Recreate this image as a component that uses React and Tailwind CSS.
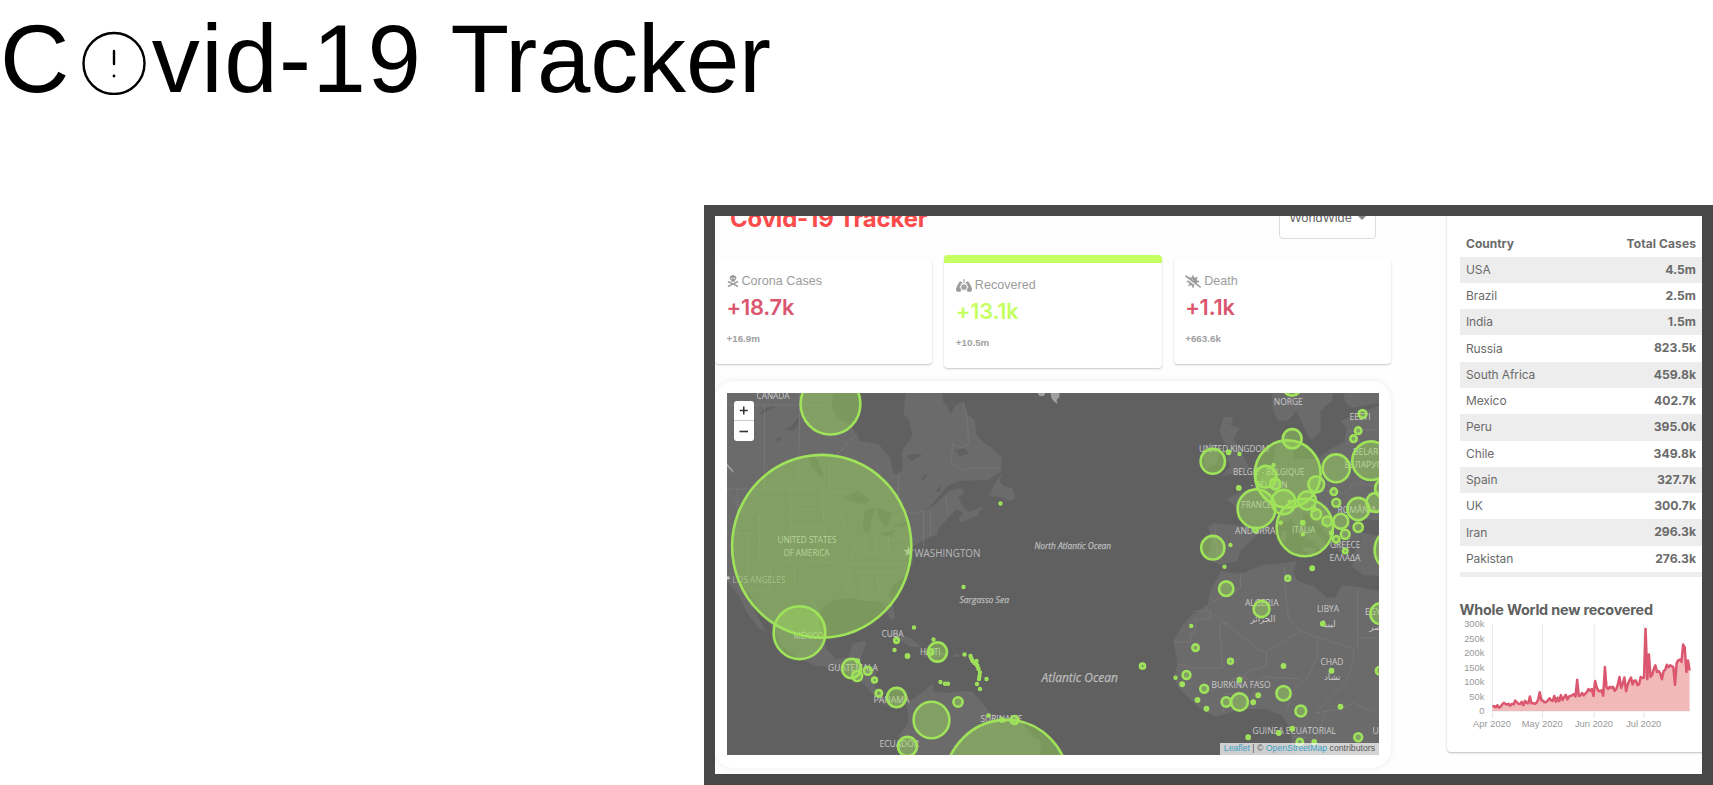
import { FaSkullCrossbones, FaLungsVirus, FaVirusSlash } from "react-icons/fa";

const countries = [
  ["USA", "4.5m"], ["Brazil", "2.5m"], ["India", "1.5m"], ["Russia", "823.5k"],
  ["South Africa", "459.8k"], ["Mexico", "402.7k"], ["Peru", "395.0k"], ["Chile", "349.8k"],
  ["Spain", "327.7k"], ["UK", "300.7k"], ["Iran", "296.3k"], ["Pakistan", "276.3k"],
];

// Daily values in thousands, starting 1 April 2020
const daily = [
  15, 17, 13, 20, 12, 15, 23, 28, 25, 22, 25, 18, 25, 23, 36, 30, 25, 24, 32, 20,
  35, 28, 27, 50, 27, 27, 25, 28, 38, 65, 38, 36, 30, 31, 36, 44, 37, 35, 52, 32,
  46, 34, 55, 38, 47, 56, 40, 50, 52, 55, 58, 50, 108, 52, 54, 62, 54, 60, 66, 76,
  70, 76, 52, 104, 82, 70, 68, 72, 53, 152, 82, 76, 84, 80, 84, 70, 76, 92, 118, 80,
  95, 116, 68, 92, 105, 116, 92, 105, 106, 90, 92, 118, 114, 115, 284, 110, 196, 118, 125, 145,
  158, 135, 138, 130, 110, 138, 142, 160, 152, 158, 155, 152, 90, 165, 175, 178, 170, 230, 220, 135,
  175, 140,
];

const land = [
  "M726 392H833L831 406L838 417L850 424L860 440L878 443L889 456L893 472L897 474L902 468L901 450L910 438L912 434L909 420L903 413L905 392H942L943 402L947 405L950 413L955 404L963 401L967 413L974 419L976 434L984 442L990 446L1001 456V470L988 479L960 480L948 484L938 496L925 510L935 503L948 490L962 487L964 492L958 496L962 505L968 511L978 507L984 505L976 515L960 522L958 517L963 511L955 509L945 520L938 527L937 533L922 540L914 544L911 548L913 556L912 563L905 574L892 586L888 594L893 606L895 616L891 620L887 613L883 603L876 600L862 600L850 597L834 599L822 606L818 618L820 632L826 648L836 658L848 656L852 643L862 640L866 642L861 655L860 664L876 665L874 684L882 697L894 698L903 698L902 704L894 703L884 704L876 698L868 688L860 680L846 671L832 666L815 665L796 656L780 645L773 628L758 608L748 590L745 588L752 606L760 620L766 631L758 627L746 611L738 594L726 580Z",
  "M905 703L915 696L925 689L933 682L932 690L946 692L960 690L972 691L982 702L990 712L1008 716L1022 722L1032 735L1040 740V755H900L896 745L899 733L908 722L907 709Z",
  "M1002 471L995 481L988 495L1001 496L1009 500L1015 497L1012 487L1003 485L999 481Z",
  "M884 634L895 631L910 637L921 646L910 646L897 637ZM923 647L935 648L948 654L936 657L922 655ZM953 653H959V656H953Z",
  "M1173 640L1182 624L1191 614L1207 604L1210 589L1221 570L1240 573L1262 564L1285 562L1296 560L1293 572L1297 580L1313 585L1327 597L1335 596L1341 584L1352 585L1379 590V755H1294L1291 742L1290 728L1281 714L1265 708L1240 708L1215 716L1200 708L1187 696L1178 687L1173 676L1177 662Z",
  "M1208 525L1213 522L1243 525L1238 508L1226 498L1240 491L1252 487L1263 474L1272 466L1275 448L1284 432L1290 440L1294 458L1316 458L1330 448L1344 441L1346 427L1340 420L1379 404V520L1361 517L1355 530L1379 535V575L1363 574L1352 566L1353 552L1362 539L1348 540L1350 553L1341 553L1331 540L1320 525L1308 514L1302 511L1302 522L1318 534L1326 544L1320 550L1314 542L1297 531L1291 518L1276 526L1264 530L1257 534L1250 540L1240 550L1237 560L1220 564L1207 558L1211 541Z",
  "M1272 392L1272 409L1278 420L1288 419L1296 410L1303 425L1310 439L1320 431L1320 410L1332 399V392Z",
  "M1223 416L1233 416L1230 424L1239 427L1233 438L1240 449L1246 461L1249 467L1236 472L1221 475L1230 465L1226 457L1232 451L1223 440L1219 430ZM1209 441L1219 447L1216 463L1205 468L1203 456Z",
  "M1343 392H1379V402L1351 407L1345 402Z",
  "M1302 546L1316 547L1314 554L1303 550ZM1281 529L1287 530L1285 541L1280 539Z",
];

const lakes = [
  "M844 497L857 490L869 498L864 503L853 501ZM864 510L874 507L868 533L862 528ZM875 507L892 512L886 526L880 519ZM880 533L895 529L890 536ZM893 524L907 521L904 526Z",
  "M806 453L816 457L823 473L821 477L811 465ZM758 414L764 407L775 405L765 411ZM785 428L791 425L798 416L797 424L793 430ZM775 438L782 436L778 441Z",
  "M906 455L914 453L922 454L911 460ZM921 476L928 472L922 481ZM935 490L941 484L939 491ZM955 449L964 447L969 453L959 455Z",
];

const borders = [
  "M726 404H832M764 404V488M799 392V425L798 480M726 488H820L830 492L848 490M829 461V488M829 461L857 432M790 488V566M790 508H822M790 526H824M737 488V532M759 514V561M726 532H760M760 538H790M747 532V584M768 561H832M727 488L742 510L759 514M822 490L825 560L842 566M840 508L845 530L855 540L850 562L846 590M865 533V552M875 533V554M888 534V548M858 556L874 552L890 540L905 535M842 563H910M850 571H898M862 572V597M876 572L880 597M770 561V590L742 590M794 561V588L808 595L815 606M898 472V505L912 513L922 510M923 510V548M930 510V535M945 495L948 514M963 401L967 420L968 443L962 447L952 443L951 462L962 470L968 467H998",
];

const african = [
  "M1210 611V618H1195V632H1190V641H1173M1191 610H1210L1258 649L1266 651L1300 630L1288 617L1285 590L1284 565M1240 572V587L1210 602M1219 623L1222 667L1196 667L1176 663M1266 651V665L1248 670L1240 680M1300 630L1316 636L1353 648V661L1346 680L1315 712M1316 636L1317 655L1306 678L1293 690L1285 712M1357 590V648M1357 637H1379M1228 622H1219M1210 690L1222 682L1240 675L1255 682L1264 676L1300 678M1223 712V694L1240 691M1252 708L1254 690M1315 712L1340 708L1353 702L1378 713M1291 735L1316 738L1325 712",
  "M1325 468L1328 485L1343 493L1354 482L1379 485M1240 526L1252 531M1270 490L1275 509L1298 506M1298 460L1308 490L1335 490M1335 501L1350 525L1340 534M1348 430L1379 428M1345 443L1360 440M1215 526L1216 556",
];

const circles = [
  [830, 403, 31], [821.2, 545.3, 90.7], [799, 631.7, 27], [896, 639.5, 3.4], [913.5, 626.5, 2], [933, 638.5, 2],
  [894, 649, 2], [907, 655, 2.7], [930, 651, 3.8], [937, 651, 10.5], [964, 653.5, 2], [970, 655, 2], [971, 657.5, 2],
  [972, 660, 2], [974, 662, 2], [976, 660, 2], [976, 663.5, 2], [977, 665, 2], [978, 668, 2], [979.5, 671.5, 2],
  [979, 675, 2], [978.5, 678, 2], [976.5, 683, 2], [986, 678, 2], [979.5, 688, 2], [940, 681, 2], [944.5, 682.7, 2],
  [947.5, 682.7, 2], [851, 667.5, 10.5], [857, 660, 2.4], [856.7, 675, 6], [867.3, 669.7, 5], [874, 679, 3.5],
  [878.3, 692.3, 4.3], [896, 696.5, 10.5], [931, 719, 19], [957.5, 701, 5.7], [1014, 719, 5], [988, 714.5, 2],
  [1001.5, 719, 2.7], [907, 745.5, 10.5], [1006, 782, 63], [1000, 502.5, 2], [963, 586, 2], [1142, 665, 3.6],
  [1291.5, 386, 9.7], [1291.7, 437.7, 10.5], [1287.2, 473, 34], [1212.3, 460.3, 13.3], [1228, 451.3, 2.7], [1239, 453, 2],
  [1265.3, 475.7, 11.7], [1273, 464, 2], [1274.7, 483, 6.3], [1283, 501, 13], [1304.3, 526.5, 29.3], [1306.5, 499.5, 10],
  [1315.7, 483.3, 9], [1335.7, 467.3, 14.7], [1362, 413, 5], [1357.7, 429.7, 4.3], [1353, 437.7, 4.3], [1370.7, 459.7, 20],
  [1384, 487.5, 10.5], [1375, 501.5, 10.3], [1357.7, 508, 12], [1333.3, 490.7, 4.3], [1335.7, 501.7, 5], [1315.7, 513.3, 6],
  [1313, 508, 3], [1326.7, 520.3, 5.8], [1340.3, 520.3, 8.5], [1357.7, 526.3, 5.7], [1344.7, 533.3, 5.5], [1335.7, 538.3, 4.3],
  [1344.7, 550, 3.3], [1331, 532, 2.4], [1302.3, 521.7, 2.7], [1302.3, 533.3, 2], [1280.3, 521.7, 2], [1289.5, 501, 2.2],
  [1256, 507.7, 20], [1255, 529, 3], [1238.3, 487, 2.7], [1212.3, 546.7, 12.7], [1230, 544, 2], [1224, 565.7, 2],
  [1311.7, 567.3, 2.7], [1287.3, 577.3, 3.5], [1396, 549, 23], [1225.7, 587.7, 8.3], [1261, 608, 9], [1322.3, 622.7, 2.7],
  [1380, 612.7, 11.3], [1190.7, 625, 2], [1195, 646.7, 4.3], [1230, 660.3, 3.5], [1283, 665, 2.7], [1331, 669.7, 2.7],
  [1379, 669.7, 4.7], [1175, 676.7, 2], [1186, 674, 5], [1181.7, 683.3, 2.7], [1203.7, 687.7, 5], [1239, 678.7, 2.7],
  [1257.7, 694.3, 2.7], [1197, 699, 2.7], [1206, 707.7, 2.7], [1225.7, 701, 5.7], [1239, 701, 9.5], [1252.7, 701.3, 2.7],
  [1283, 692.3, 8.2], [1300.3, 710, 6.5], [1340, 705.7, 2.7], [1291.7, 727.7, 2.7], [1278.3, 732, 2.7], [1247.7, 736.3, 2.7],
  [1299.3, 741, 4.3], [1313.7, 741, 2.7], [1357.7, 736.3, 5],
];

// name, left edge, baseline, width
const labels = [
  ["CANADA", 756, 398, 33], ["NORGE", 1273.3, 403.5, 29], ["EESTI", 1349, 418.5, 21], ["UNITED KINGDOM", 1198.5, 451, 70],
  ["BELGIË - BELGIQUE", 1232.5, 474, 71.5], ["- BELGIEN", 1250, 487, 37], ["FRANCE", 1241, 507, 30], ["ANDORRA", 1234.5, 532.5, 40.5],
  ["ITALIA", 1291.5, 532, 23.5], ["ROMÂNIA", 1337, 511.5, 39], ["BELARUS", 1352.5, 454, 36], ["БЕЛАРУСЬ", 1344, 467, 43],
  ["GREECE", 1329.5, 546.5, 30.5], ["ΕΛΛΑΔΑ", 1329, 560, 31], ["UNITED STATES", 777, 542, 59], ["OF AMERICA", 783, 555, 46],
  ["MÉXICO", 793, 638, 30], ["CUBA", 881, 635.5, 22], ["HAITI", 919.5, 654, 20.5], ["GUATEMALA", 827.5, 670, 50],
  ["PANAMA", 873, 702, 36], ["SURINAME", 980, 721, 42], ["ECUADOR", 879, 746, 39.5], ["ALGERIA", 1244.5, 605, 33.5],
  ["الجزائر", 1250, 621, 20], ["LIBYA", 1316.5, 610.5, 22], ["ليبيا", 1322, 626, 11], ["EGYPT", 1364.5, 613.5, 25],
  ["مصر", 1369, 629, 13], ["CHAD", 1320, 663.5, 23], ["تشاد", 1323.5, 679, 15.5], ["BURKINA FASO", 1211, 686.5, 59],
  ["GUINEA ECUATORIAL", 1252, 733, 83.5], ["UGANDA", 1372, 733, 36],
];

function WorldMap() {
  return (
    <svg viewBox="726.5 392 652.5 362.5" className="block h-[362.5px] w-[652.5px] bg-[#606060]">
      <g fill="#6b6b6b">{land.map((d) => <path key={d} d={d} />)}</g>
      <g fill="#606060">{lakes.map((d) => <path key={d} d={d} />)}</g>
      <path d="M1037 392H1045L1043 395H1039ZM1050 392H1059V396L1056 399L1057 403L1053 400L1051 397ZM726 462L733 470L733 472L726 465Z" fill="#a0a0a0" />
      <g fill="none" stroke="#858585" strokeWidth=".6" strokeDasharray="2 1">{borders.map((d) => <path key={d} d={d} />)}</g>
      <g fill="none" stroke="#807a7d" strokeWidth=".6">{african.map((d) => <path key={d} d={d} />)}</g>
      <g fill="#cbcbcb" fontFamily="'Open Sans','Noto Sans','DejaVu Sans',sans-serif" fontSize="8.6">
        {labels.map(([t, x, y, w]) => (
          <text key={t} x={x} y={y} textLength={/[\u0600-\u06ff]/.test(t) ? undefined : w} lengthAdjust="spacingAndGlyphs">{t}</text>
        ))}
        <text x="732" y="582" textLength="53" fill="#a9a9a9" lengthAdjust="spacingAndGlyphs">LOS ANGELES</text>
        <text x="914" y="556.3" textLength="66" fontSize="10.6" fill="#b9b9bc" lengthAdjust="spacingAndGlyphs">WASHINGTON</text>
        <rect x="726.5" y="575.5" width="2.5" height="2.8" />
        <path d="M908 545l1.5 3.8h4l-3.1 2.5 1.2 4-3.6-2.4-3.4 2.4 1.2-4-3.1-2.5h4z" fill="#b5b5b5" />
        <g fontStyle="italic" fill="#bcbcbc" stroke="#bcbcbc" strokeWidth=".25">
          <text x="1034" y="547.5" textLength="76.5" lengthAdjust="spacingAndGlyphs">North Atlantic Ocean</text>
          <text x="959" y="601.5" textLength="49.5" fontSize="9.2" lengthAdjust="spacingAndGlyphs">Sargasso Sea</text>
          <text x="1041" y="681" textLength="76.5" fontSize="12.4" lengthAdjust="spacingAndGlyphs">Atlantic Ocean</text>
        </g>
      </g>
      <g fill="#9fe35a" fillOpacity=".43" stroke="#9fe35a" strokeWidth="2.6">
        {circles.map(([x, y, r]) => (
          <ellipse key={x + "-" + y} cx={x} cy={y} rx={Math.max(r - 1.1, 0.9)} ry={Math.max(r * 1.02 - 1.1, 0.9)} />
        ))}
      </g>
    </svg>
  );
}

function RecoveredChart() {
  const pts = daily.map((v, i) => `${(1492.4 + i * 1.63).toFixed(1)} ${(710 - v * 0.289).toFixed(1)}`);
  const line = "M" + pts.join("L");
  return (
    <svg viewBox="1460 616 236 116" className="block h-[116px] w-[236px]">
      <g stroke="#e6e6e6" strokeWidth="1">
        <path d="M1492.4 623V717M1542.4 623V717M1594.2 623V717M1644 623V717M1492 710H1690" fill="none" />
      </g>
      <path d={line + "L1689.6 710L1492.4 710Z"} fill="#f1b9ba" />
      <path d={line} fill="none" stroke="#db5770" strokeWidth="2.5" strokeLinejoin="round" />
      <g fill="#999" fontFamily="'Liberation Sans',Arial,sans-serif" fontSize="9.3">
        {["300k", "250k", "200k", "150k", "100k", "50k", "0"].map((t, i) => (
          <text key={t} x="1484.3" y={626.2 + i * 14.47} textAnchor="end">{t}</text>
        ))}
        {[["Apr 2020", 1492, 38], ["May 2020", 1542.2, 41], ["Jun 2020", 1594, 38], ["Jul 2020", 1643.7, 35]].map(([t, x, w]) => (
          <text key={t} x={x} y="726.3" textAnchor="middle" textLength={w}>{t}</text>
        ))}
      </g>
    </svg>
  );
}

function StatCard({ icon, title, value, total, active }) {
  return (
    <div className={"w-[217.5px] rounded-[4px] bg-white pl-[11.5px] shadow-[0_1px_2px_rgba(0,0,0,0.22)] " + (active ? "h-[113px] border-t-8 border-[#c5ff62]" : "mt-[4px] h-[105px]")}>
      <div className="mt-[13px] flex h-[18px] items-center gap-[3px] font-['Liberation_Sans',Arial,sans-serif] text-[12.6px] text-[#9c9c9c]">
        {icon}
        <span>{title}</span>
      </div>
      <div className={"mt-[3px] h-[28px] font-['Inter',sans-serif] text-[21.8px] leading-[28px] font-semibold tracking-[-0.2px] " + (active ? "text-[#c5ff62]" : "text-[#db5770]")}>{value}</div>
      <div className="mt-[11.5px] font-['Liberation_Sans',Arial,sans-serif] text-[9.8px] leading-[12px] font-bold text-[#a0a0a0]">{total}</div>
    </div>
  );
}

export default function App() {
  return (
    <div className="h-[785px] w-[1713px] overflow-hidden bg-white">
      <h1 className="flex h-[205px] items-start font-['Liberation_Sans',Arial,sans-serif] text-[96px] leading-[117px] font-normal text-black">
        <span>C</span>
        <svg viewBox="0 0 64 64" className="mt-[31px] mr-[5.5px] ml-[13px] h-[64px] w-[64px]" fill="none" stroke="#000" strokeWidth="2.4" strokeLinecap="round">
          <ellipse cx="32" cy="32.5" rx="30.5" ry="30.5" />
          <path d="M32 20V33" />
          <circle cx="32" cy="45" r="1.4" fill="#000" stroke="none" />
        </svg>
        <span className="tracking-[1.5px]">vid-19 <span className="tracking-[-0.2px]">Tracker</span></span>
      </h1>
      <div className="ml-[704px] flex h-[580px] w-[1009px] border-[11px] border-[#484848] bg-white">
        <div className="flex w-full overflow-hidden bg-[#fefefe]">
          <div className="w-[676px] shrink-0">
            <div className="-mt-[20px] flex h-[43px] items-center justify-between pr-[15.5px] pl-[15px]">
              <div className="pt-[3px] font-['Inter',sans-serif] text-[24px] leading-none font-bold tracking-[-0.2px] text-[#fc4b4b]">Covid-19 Tracker</div>
              <div className="flex h-full w-[97px] items-center gap-[6px] rounded-[4px] border border-[#dcdcdc] bg-white pt-px pl-[10px] font-['Liberation_Sans',Arial,sans-serif] text-[12.8px] text-[#666]">
                WorldWide
                <span className="h-0 w-0 border-x-4 border-t-4 border-x-transparent border-t-[#888]" />
              </div>
            </div>
            <div className="mt-[16px] flex h-[126px] gap-3">
              <StatCard icon={<FaSkullCrossbones size={12} />} title="Corona Cases" value="+18.7k" total="+16.9m" />
              <StatCard active icon={<FaLungsVirus size={13} className="w-4" />} title="Recovered" value="+13.1k" total="+10.5m" />
              <StatCard icon={<FaVirusSlash size={13} className="w-4" />} title="Death" value="+1.1k" total="+663.6k" />
            </div>
            <div className="relative -ml-px h-[387px] w-[677px] rounded-[20px] bg-white pt-[11.5px] pl-[12.5px] shadow-[0_0_7px_rgba(0,0,0,0.08)]">
              <WorldMap />
              <div className="absolute top-[20px] left-[20px] flex h-[40px] w-[20px] flex-col rounded-[3px] bg-white text-[#333]">
                {["M5.5 10H14M9.75 5.75V14.25", "M5.5 10.5H14"].map((d, i) => (
                  <svg key={d} viewBox="0 0 20 20" className={"h-5 w-5 " + (i ? "" : "border-b border-[#ccc]")}>
                    <path d={d} fill="none" stroke="#333" strokeWidth="1.6" />
                  </svg>
                ))}
              </div>
              <div className="absolute right-[12px] bottom-[13px] flex h-[12px] items-center bg-white/70 px-1 font-['Liberation_Sans',Arial,sans-serif] text-[8.7px] whitespace-pre text-[#555]">
                <span className="text-[#3f9fc4]">Leaflet</span> | © <span className="text-[#3f9fc4]">OpenStreetMap</span> contributors
              </div>
            </div>
          </div>
          <div className="-mt-4 ml-[55.5px] h-[552px] w-[280px] shrink-0 rounded-[4px] bg-white pl-[13px] font-['Inter',sans-serif] text-[#6a6a6a] shadow-[0_1px_2px_rgba(0,0,0,0.25)]">
            <div className="mt-[37px] h-[340px] overflow-hidden text-[12px]">
              <div className="flex h-[13.5px] items-center justify-between pr-[30.5px] pl-[6.5px] font-bold text-[#6a6a6a]">
                <span>Country</span>
                <span className="tracking-[0.1px]">Total Cases</span>
              </div>
              <div className="mt-[6px]">
                {countries.map(([name, cases]) => (
                  <div key={name} className="flex h-[26.3px] items-center justify-between pr-[30.5px] pl-[6.5px] odd:bg-[#ededed]">
                    <span className="tracking-[-0.1px]">{name}</span>
                    <span className="text-[12.2px] font-bold">{cases}</span>
                  </div>
                ))}
                <div className="h-[26px] bg-[#ededed]" />
              </div>
            </div>
            <h3 className="mt-[23px] h-[17px] text-[14.4px] leading-[20px] font-bold tracking-[-0.2px] text-[#606060]">Whole World new recovered</h3>
            <RecoveredChart />
          </div>
        </div>
      </div>
    </div>
  );
}
